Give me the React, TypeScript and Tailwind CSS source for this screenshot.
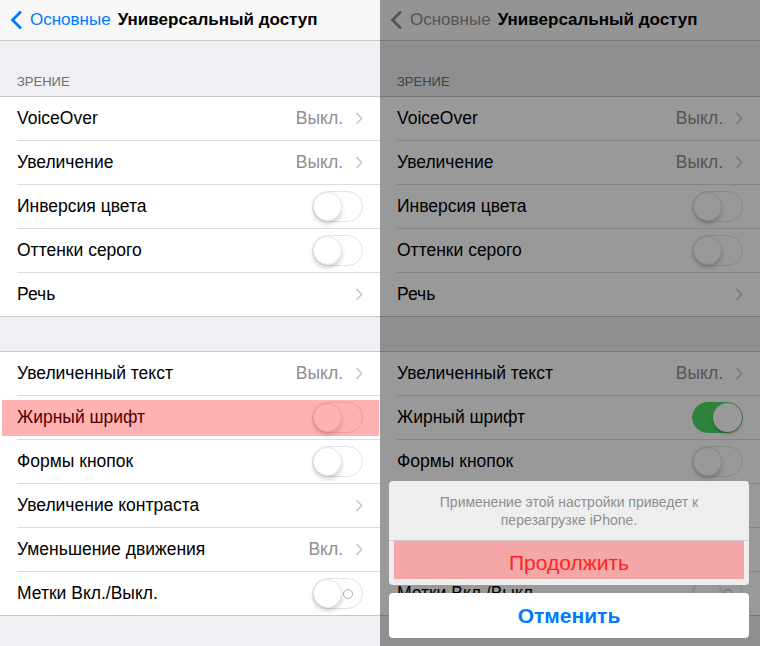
import React from "react";

type RowData = {
  label: string;
  value?: string;
  chevron?: boolean;
  toggle?: "off" | "on" | "labels";
};

const VISION: RowData[] = [
  { label: "VoiceOver", value: "Выкл.", chevron: true },
  { label: "Увеличение", value: "Выкл.", chevron: true },
  { label: "Инверсия цвета", toggle: "off" },
  { label: "Оттенки серого", toggle: "off" },
  { label: "Речь", chevron: true },
];

const TEXT_ROWS: RowData[] = [
  { label: "Увеличенный текст", value: "Выкл.", chevron: true },
  { label: "Жирный шрифт", toggle: "off" },
  { label: "Формы кнопок", toggle: "off" },
  { label: "Увеличение контраста", chevron: true },
  { label: "Уменьшение движения", value: "Вкл.", chevron: true },
  { label: "Метки Вкл./Выкл.", toggle: "labels" },
];

function Chevron({ color = "#c7c7cc" }: { color?: string }) {
  return (
    <svg width="8" height="13" viewBox="0 0 8 13" className="ml-[12px] shrink-0">
      <polyline points="1.5,1 6.5,6.5 1.5,12" fill="none" stroke={color} strokeWidth="1.6" />
    </svg>
  );
}

function Toggle({ mode }: { mode: "off" | "on" | "labels" }) {
  const on = mode === "on";
  return (
    <div
      className={
        on
          ? "relative w-[51px] h-[31px] rounded-full bg-[#4cd964] border border-[#4cd964] shrink-0"
          : "relative w-[51px] h-[31px] rounded-full bg-white border border-[#e3e3e6] shrink-0"
      }
    >
      {mode === "labels" && (
        <div className="absolute right-[9px] top-[10px] w-[10px] h-[10px] rounded-full border border-[#b0b0b4]" />
      )}
      <div
        className={
          on
            ? "absolute right-0 top-0 w-[29px] h-[29px] rounded-full bg-white shadow-[0_2px_3px_rgba(0,0,0,0.25)]"
            : "absolute left-0 top-0 w-[29px] h-[29px] rounded-full bg-white border border-[#e6e6e9] shadow-[0_3px_4px_rgba(0,0,0,0.18)]"
        }
      />
    </div>
  );
}

function Group({ rows, boldOn }: { rows: RowData[]; boldOn: boolean }) {
  return (
    <div className="bg-white border-y border-[#c8c7cc]">
      {rows.map((r, i) => {
        const mode = r.label === "Жирный шрифт" && boldOn ? "on" : r.toggle;
        return (
          <div key={r.label} className="pl-[17px]">
            <div
              className={
                i === rows.length - 1
                  ? "flex items-center h-[43px] pr-[17px]"
                  : "flex items-center h-[44px] pr-[17px] border-b border-[#dcdce0]"
              }
            >
              <span className="flex-1 text-[17.5px] text-black">{r.label}</span>
              {r.value && <span className="text-[17.5px] text-[#8e8e93]">{r.value}</span>}
              {r.chevron && <Chevron />}
              {mode && <Toggle mode={mode} />}
            </div>
          </div>
        );
      })}
    </div>
  );
}

function Screen({ dimmed }: { dimmed: boolean }) {
  return (
    <div className="flex flex-col h-full bg-[#efeff4]">
      <div className="h-[41px] flex items-center bg-[#f7f7f8] border-b border-[#c8c7cc] pl-[10px]">
        <svg width="13" height="20" viewBox="0 0 13 20" className="shrink-0">
          <polyline
            points="11,1.5 2.5,10 11,18.5"
            fill="none"
            stroke={dimmed ? "#8e8e8e" : "#007aff"}
            strokeWidth="2.8"
          />
        </svg>
        <span className={dimmed ? "ml-[7px] text-[17px] text-[#8e8e8e]" : "ml-[7px] text-[17px] text-[#007aff]"}>
          Основные
        </span>
        <span className="ml-[7px] text-[17px] font-bold text-black">Универсальный доступ</span>
      </div>
      <div className="h-[55px] flex items-end pl-[17px] pb-[5px]">
        <span className="text-[13px] text-[#6d6d72]">ЗРЕНИЕ</span>
      </div>
      <Group rows={VISION} boldOn={false} />
      <div className="h-[34px]" />
      <Group rows={TEXT_ROWS} boldOn={dimmed} />
    </div>
  );
}

export default function App() {
  return (
    <div className="flex w-[760px] h-[646px] overflow-hidden bg-white font-['Liberation_Sans',Arial,sans-serif]">
      <div className="relative w-[380px] h-full">
        <Screen dimmed={false} />
        {/* highlight on "Жирный шрифт" */}
        <div className="absolute left-[2px] right-[1px] top-[400px] h-[36px] bg-[#ff0000]/30" />
      </div>
      <div className="relative w-[380px] h-full">
        <Screen dimmed />
        <div className="absolute inset-0 bg-black/40" />
        <div className="absolute left-[9px] right-[11px] top-[481px] flex flex-col gap-[8px]">
          <div className="rounded-[4px] bg-[#eeeeee] overflow-hidden">
            <div className="h-[60px] flex flex-col items-center justify-center text-[14px] leading-[18px] text-[#8f8f8f] border-b border-[#cfcfd2]">
              <span>Применение этой настройки приведет к</span>
              <span>перезагрузке iPhone.</span>
            </div>
            <div className="h-[44px] px-[5px] pb-[6px]">
              <div className="h-full flex items-center justify-center pt-[6px] bg-[#f5a6a6] text-[21px] text-[#ff2424]">
                Продолжить
              </div>
            </div>
          </div>
          <div className="h-[45px] rounded-[4px] bg-white flex items-center justify-center text-[21px] font-bold text-[#007aff]">
            Отменить
          </div>
        </div>
      </div>
    </div>
  );
}
